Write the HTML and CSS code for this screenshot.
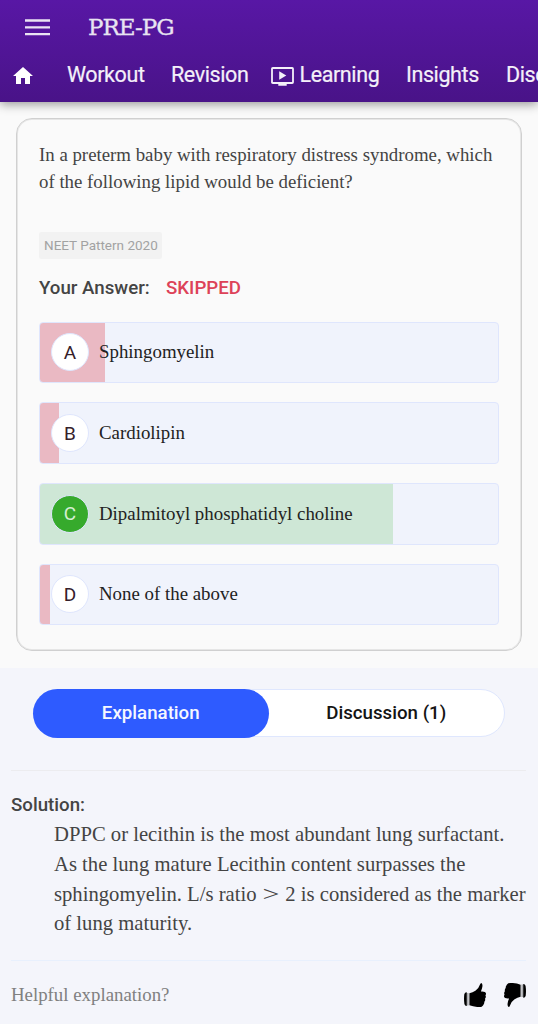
FILE: index.html
```html
<!DOCTYPE html>
<html lang="en">
<head>
<meta charset="utf-8">
<title>PRE-PG</title>
<link rel="stylesheet" href="styles.css">
</head>
<body>
<header class="header">
  <div class="brand-row">
    <svg class="menu-icon" viewBox="0 0 26 17" fill="currentColor"><path d="M0 0h26v2.4H0zM0 7.1h26v2.4H0zM0 14.2h26v2.4H0z"/></svg>
    <div class="brand">PRE-PG</div>
  </div>
  <nav class="nav">
    <svg class="home-icon" viewBox="2 3 20 17" fill="currentColor"><path d="M10 20v-6h4v6h5v-8h3L12 3 2 12h3v8z"/></svg>
    <span class="nav-item workout">Workout</span>
    <span class="nav-item revision">Revision</span>
    <span class="nav-item learning"><svg class="video-icon" viewBox="0 0 23 19"><path d="M1.800 1h19.400q.8 0 .8.8v13.400q0 .8-.8.8H1.800q-.8 0-.8-.8V1.800q0-.8.8-.8z" fill="none" stroke="currentColor" stroke-width="1.800"/><path d="M8.200 4.300v8.400l7.100-4.200zM7.300 16h8.400v2.700H7.300z" fill="currentColor"/></svg><span class="learning-text">Learning</span></span>
    <span class="nav-item insights">Insights</span>
    <span class="nav-item discuss">Disc</span>
  </nav>
</header>
<main>
  <section class="card">
    <p class="question">In a preterm baby with respiratory distress syndrome, which<br>of the following lipid would be deficient?</p>
    <div class="tag">NEET Pattern 2020</div>
    <div class="answer"><span class="answer-label">Your Answer:</span><span class="skipped">SKIPPED</span></div>
    <div class="options">
      <div class="option bar-a"><span class="letter">A</span><span class="label">Sphingomyelin</span></div>
      <div class="option bar-b"><span class="letter">B</span><span class="label">Cardiolipin</span></div>
      <div class="option bar-c"><span class="letter correct">C</span><span class="label">Dipalmitoyl phosphatidyl choline</span></div>
      <div class="option bar-d"><span class="letter">D</span><span class="label">None of the above</span></div>
    </div>
  </section>
  <section class="details">
    <div class="tabs">
      <div class="tab active"><span>Explanation</span></div>
      <div class="tab"><span>Discussion (1)</span></div>
    </div>
    <div class="solution">
      <h2 class="solution-title">Solution:</h2>
      <p class="solution-text">DPPC or lecithin is the most abundant lung surfactant.<br>As the lung mature Lecithin content surpasses the<br>sphingomyelin. L/s ratio <span class="gt">&gt;</span> 2 is considered as the marker<br>of lung maturity.</p>
    </div>
    <div class="feedback">
      <span class="helpful">Helpful explanation?</span>
      <svg class="thumb" viewBox="0 0 22 24"><path d="M2.800 9.300Q.6 9.300.3 11.300-.3 16 .4 21q.3 1.800 2.400 2zM3.700 10h.5v12.600h-.5zM5.400 10.200q3.300-.6 6-2.500 3.600-2.500 4.600-6.100Q16.500 0 17.400 0q1.500 1 .9 4.100-.4 2.200-1.400 4.400 2.300-.3 4 .4 1.300.9 1.100 2.100-.1.700-.6 1.300.6.900.4 2-.2.900-.8 1.400.4.800.1 1.800-.3.900-.9 1.400.3.900-.2 1.900-.8 2-2.300 2.900-1.900.5-4.500.2-4.300-.2-7.800-1.600z"/></svg>
      <svg class="thumb down" viewBox="0 0 22 24"><path d="M2.800 9.300Q.6 9.300.3 11.300-.3 16 .4 21q.3 1.800 2.400 2zM3.700 10h.5v12.600h-.5zM5.400 10.200q3.300-.6 6-2.500 3.600-2.500 4.600-6.100Q16.500 0 17.400 0q1.500 1 .9 4.100-.4 2.200-1.400 4.400 2.300-.3 4 .4 1.300.9 1.100 2.100-.1.700-.6 1.300.6.900.4 2-.2.900-.8 1.400.4.800.1 1.800-.3.900-.9 1.400.3.900-.2 1.900-.8 2-2.300 2.900-1.900.5-4.500.2-4.300-.2-7.800-1.600z"/></svg>
    </div>
  </section>
</main>
</body>
</html>
```
FILE: styles.css
```css
* { box-sizing: border-box; }
body { margin: 0; background: #fafafa; font-family: Roboto, sans-serif; overflow: hidden; color: #444; }
p, h2 { margin: 0; }
svg { display: block; flex: none; }

.header { position: relative; height: 102px; background: linear-gradient(#5817a5, #491388); box-shadow: 0 2px 10px rgba(0, 0, 0, .42); color: #fff; }
.brand-row { display: flex; align-items: center; height: 54px; padding-left: 25px; }
.menu-icon { width: 25px; height: 17px; color: #eae4f3; }
.brand { margin-left: 38px; font: 23px/30px "DejaVu Serif", serif; letter-spacing: -1px; color: #e8e3f1; -webkit-text-stroke: .3px #e8e3f1; }
.nav { display: flex; align-items: center; height: 42px; padding-left: 13px; overflow: hidden; }
.home-icon { width: 20px; height: 17px; margin-top: 1px; }
.nav-item { flex: none; font-size: 21.500px; line-height: 30px; letter-spacing: -.4px; white-space: nowrap; color: #f4f0f9; -webkit-text-stroke: .2px #f4f0f9; }
.workout { margin-left: 34px; width: 78px; }
.revision { margin-left: 26px; width: 78px; }
.learning { display: flex; align-items: center; margin-left: 22px; width: 109px; }
.video-icon { width: 23px; height: 19px; margin-top: 2px; }
.learning-text { margin-left: 5.500px; }
.insights { margin-left: 26px; width: 74px; }
.discuss { margin-left: 26px; }

.card { margin: 16px 16px 0; height: 533px; border: 1px solid #d0d0d0; box-shadow: inset 0 0 0 1px #e6e6e6; border-radius: 16px; padding: 22px 22px 0; }
.question { font: 18.830px/27px "Liberation Serif", serif; white-space: nowrap; color: #444; }
.tag { width: 123px; height: 27px; margin-top: 37px; padding-left: 5px; border-radius: 2px; background: #f2f2f2; font-size: 13.500px; line-height: 26px; color: #a2a2a2; white-space: nowrap; }
.answer { display: flex; height: 24px; margin-top: 17px; font-weight: 500; font-size: 18.700px; line-height: 24px; white-space: nowrap; }
.answer-label { width: 127px; }
.skipped { color: #dd4258; }
.options { display: flex; flex-direction: column; gap: 19px; margin-top: 21.500px; }
.option { display: flex; align-items: center; height: 61.700px; padding-left: 11px; border: 1px solid #dfe6fd; border-radius: 4px; background: #f0f3fc no-repeat; }
.bar-a { background-image: linear-gradient(#eab9c3, #eab9c3); background-size: 65px 100%; }
.bar-b { background-image: linear-gradient(#eab9c3, #eab9c3); background-size: 19px 100%; }
.bar-c { background-image: linear-gradient(#cee7d6, #cee7d6); background-size: 353px 100%; }
.bar-d { background-image: linear-gradient(#eab9c3, #eab9c3); background-size: 10px 100%; }
.letter { display: flex; align-items: center; justify-content: center; width: 38px; height: 38px; border: 1px solid #dfe6fd; border-radius: 50%; background: #fff; color: #35202a; font-size: 19px; }
.letter.correct { background: #36aa2c; color: #d5eed3; }
.label { margin-left: 10px; font: 18.870px/26px "Liberation Serif", serif; color: #222; white-space: nowrap; }

.details { height: 357px; margin-top: 17px; padding: 21px 12px 0 11px; background: #f4f5fb; }
.tabs { display: flex; width: 472px; height: 48px; margin-left: 22px; border: 1px solid #dfe7fe; border-radius: 25px; background: #fff; }
.tab { display: flex; align-items: center; justify-content: center; width: 236px; height: 49px; margin-top: -1px; padding-bottom: 2px; border-radius: 25px; font-size: 18.700px; font-weight: 500; color: #141414; }
.tab.active { margin-left: -1px; background: #2e5bff; color: #f5f7ff; }
.solution { height: 191px; margin-top: 33px; padding-top: 21px; border-top: 1px solid #ececef; border-bottom: 1px solid #e8f0fd; }
.solution-title { font-size: 18.700px; line-height: 26px; font-weight: 500; color: #444; }
.solution-text { padding-left: 43px; margin-top: 2px; font: 20.660px/29.800px "Liberation Serif", serif; color: #444; white-space: nowrap; }
.gt { display: inline-block; margin: 0 3.400px; line-height: 20px; transform: scaleX(1.450); }
.feedback { display: flex; align-items: center; height: 67px; }
.helpful { flex: 1; font: 18.830px/26px "Liberation Serif", serif; color: #808080; }
.thumb { width: 22px; height: 24px; }
.down { margin-left: 18px; transform: rotate(180deg); }
```
